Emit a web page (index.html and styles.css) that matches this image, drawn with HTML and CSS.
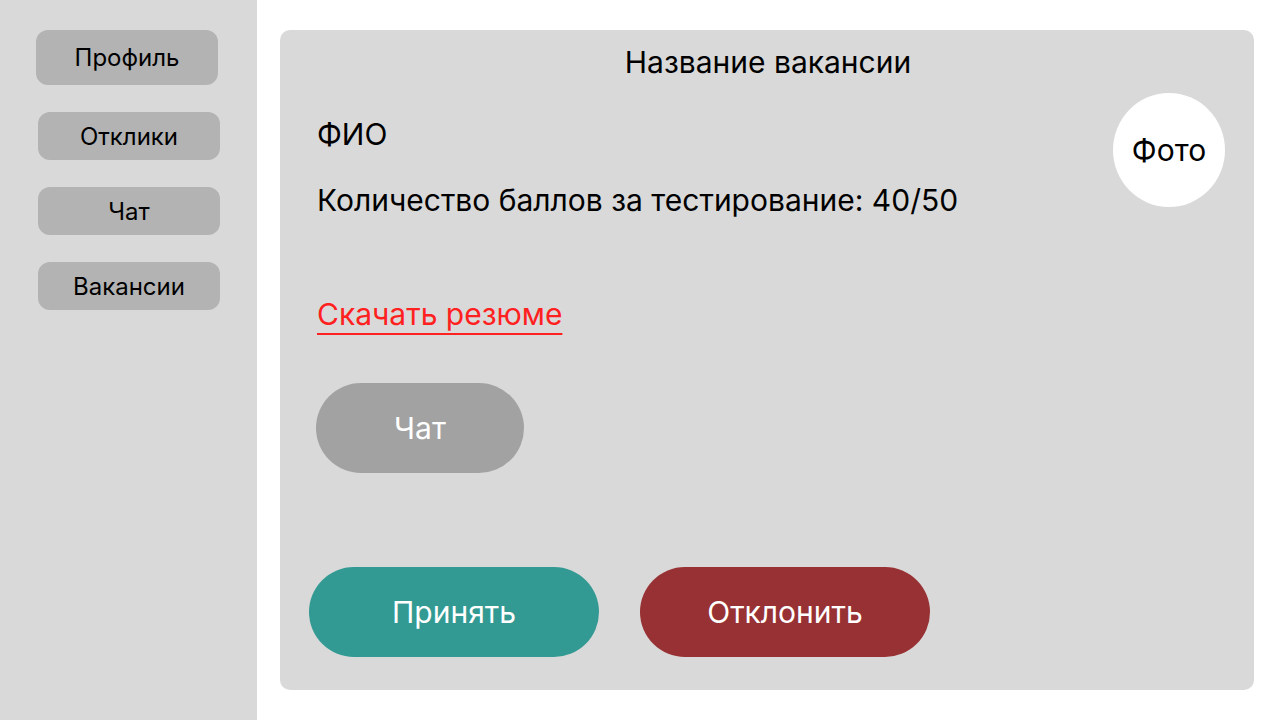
FILE: index.html
```html
<!DOCTYPE html>
<html lang="ru">
<head>
<meta charset="utf-8">
<title>Отклик</title>
<link rel="stylesheet" href="styles.css">
</head>
<body>
<div class="page">
  <aside class="sidebar">
    <nav class="nav">
      <a class="nav-btn nav-btn--first" href="#">Профиль</a>
      <a class="nav-btn" href="#">Отклики</a>
      <a class="nav-btn" href="#">Чат</a>
      <a class="nav-btn" href="#">Вакансии</a>
    </nav>
  </aside>
  <main class="main">
    <section class="card">
      <h1 class="title">Название вакансии</h1>
      <div class="info-row">
        <div class="info">
          <p class="fio">ФИО</p>
          <p class="score">Количество баллов за тестирование: 40/50</p>
        </div>
        <div class="photo">Фото</div>
      </div>
      <a class="resume" href="#">Скачать резюме</a>
      <button class="btn btn-chat">Чат</button>
      <div class="actions">
        <button class="btn btn-accept">Принять</button>
        <button class="btn btn-reject">Отклонить</button>
      </div>
    </section>
  </main>
</div>
</body>
</html>
```

FILE: styles.css
```css
* { box-sizing: border-box; }
html, body { margin: 0; padding: 0; }
body {
  background: #ffffff;
  font-family: "Inter", "Noto Sans", sans-serif;
  color: #000;
}
.page {
  display: flex;
  width: 1280px;
  height: 720px;
}
.sidebar {
  width: 257px;
  flex: none;
  background: #d9d9d9;
  height: 720px;
}
.nav {
  display: flex;
  flex-direction: column;
  gap: 27px;
  padding: 30px 0 0 38px;
}
.nav-btn {
  display: flex;
  align-items: center;
  justify-content: center;
  width: 182px;
  height: 48px;
  background: #b3b3b3;
  border-radius: 12px;
  color: #000;
  text-decoration: none;
  font-size: 24px;
}
.nav-btn--first {
  height: 55px;
  margin-left: -2px;
}
.main {
  flex: 1;
  padding: 30px 26px 30px 23px;
}
.card {
  background: #d9d9d9;
  border-radius: 10px;
  height: 660px;
  display: flex;
  flex-direction: column;
  padding: 0 29px 0 37px;
}
.title {
  margin: 16px 0 0;
  font-size: 30px;
  font-weight: 400;
  line-height: 32px;
  text-align: center;
  padding-right: 6px;
}
.info-row {
  display: flex;
  justify-content: space-between;
  margin-top: 15px;
}
.info p {
  margin: 0;
  font-size: 30px;
  line-height: 32px;
}
.fio { padding-top: 25px; }
.score { margin-top: 34px !important; }
.photo {
  width: 112px;
  height: 114px;
  border-radius: 50%;
  background: #ffffff;
  display: flex;
  align-items: center;
  justify-content: center;
  font-size: 30px;
}
.resume {
  align-self: flex-start;
  margin-top: 82px;
  font-size: 30px;
  line-height: 32px;
  color: #ff2020;
  text-decoration: underline;
  text-decoration-thickness: 2px;
  text-underline-offset: 8px;
  text-decoration-skip-ink: none;
}
.btn {
  border: none;
  font-family: inherit;
  font-size: 30px;
  color: #ffffff;
  height: 90px;
  border-radius: 45px;
  cursor: pointer;
}
.btn-chat {
  align-self: flex-start;
  margin-top: 53px;
  width: 208px;
  margin-left: -1px;
  background: #a2a2a2;
}
.actions {
  display: flex;
  gap: 41px;
  margin-top: 94px;
  margin-left: -8px;
}
.btn-accept {
  width: 290px;
  background: #329a93;
}
.btn-reject {
  width: 290px;
  background: #983133;
}
```
